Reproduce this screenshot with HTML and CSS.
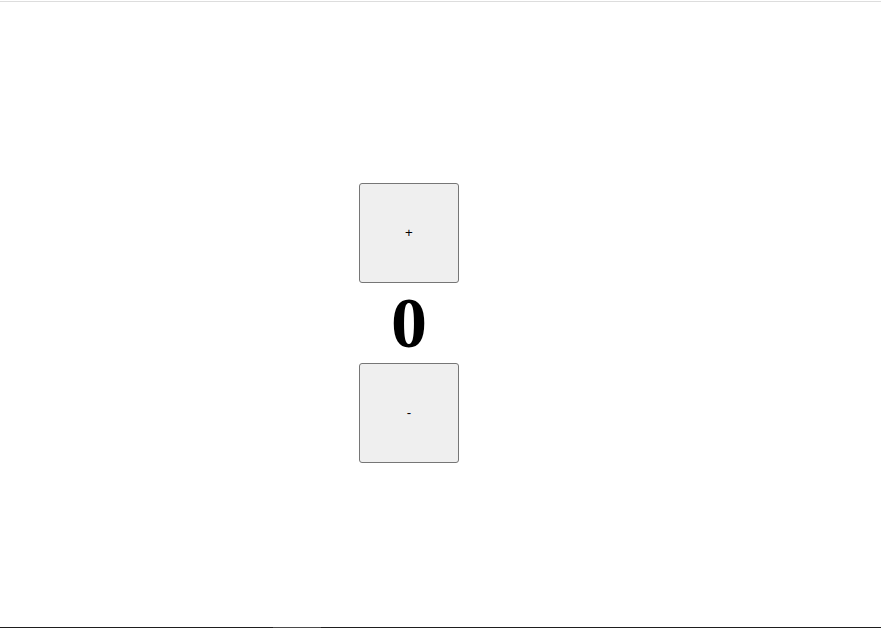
FILE: index.html
```html
<!DOCTYPE html>
<html lang="en">
<head>
<meta charset="utf-8">
<title>Counter</title>
<link rel="stylesheet" href="styles.css">
</head>
<body>
<div class="frame">
  <main class="stage">
    <div class="counter">
      <button class="step-btn" type="button">+</button>
      <div class="count">0</div>
      <button class="step-btn" type="button">-</button>
    </div>
  </main>
  <div class="bottom-bar"><span class="bottom-thumb"></span></div>
</div>
</body>
</html>
```

FILE: styles.css
```css
html, body {
  margin: 0;
  padding: 0;
  background: #ffffff;
  height: 100%;
}

.frame {
  height: 628px;
  display: flex;
  flex-direction: column;
  box-sizing: border-box;
  padding-top: 1px;
}

.stage {
  flex: 1;
  border-top: 1px solid #dddddd;
  padding-top: 181px;
  padding-left: 359px;
}

.counter {
  width: 100px;
  display: flex;
  flex-direction: column;
  align-items: center;
}

.step-btn {
  width: 100px;
  height: 100px;
  box-sizing: border-box;
  margin: 0;
  padding: 0 0 2px 0;
  background: #efefef;
  border: 1px solid #767676;
  border-radius: 3px;
  font-family: "Liberation Sans", Arial, sans-serif;
  font-size: 13.33px;
  color: #000000;
}

.count {
  height: 80px;
  line-height: 80px;
  font-family: "Liberation Serif", "Times New Roman", serif;
  font-weight: bold;
  font-size: 72px;
  color: #000000;
}

.bottom-bar {
  height: 1px;
  background: #1e1e1e;
  padding-left: 273px;
}

.bottom-thumb {
  display: block;
  width: 48px;
  height: 1px;
  background: #4a4a4a;
}
```
